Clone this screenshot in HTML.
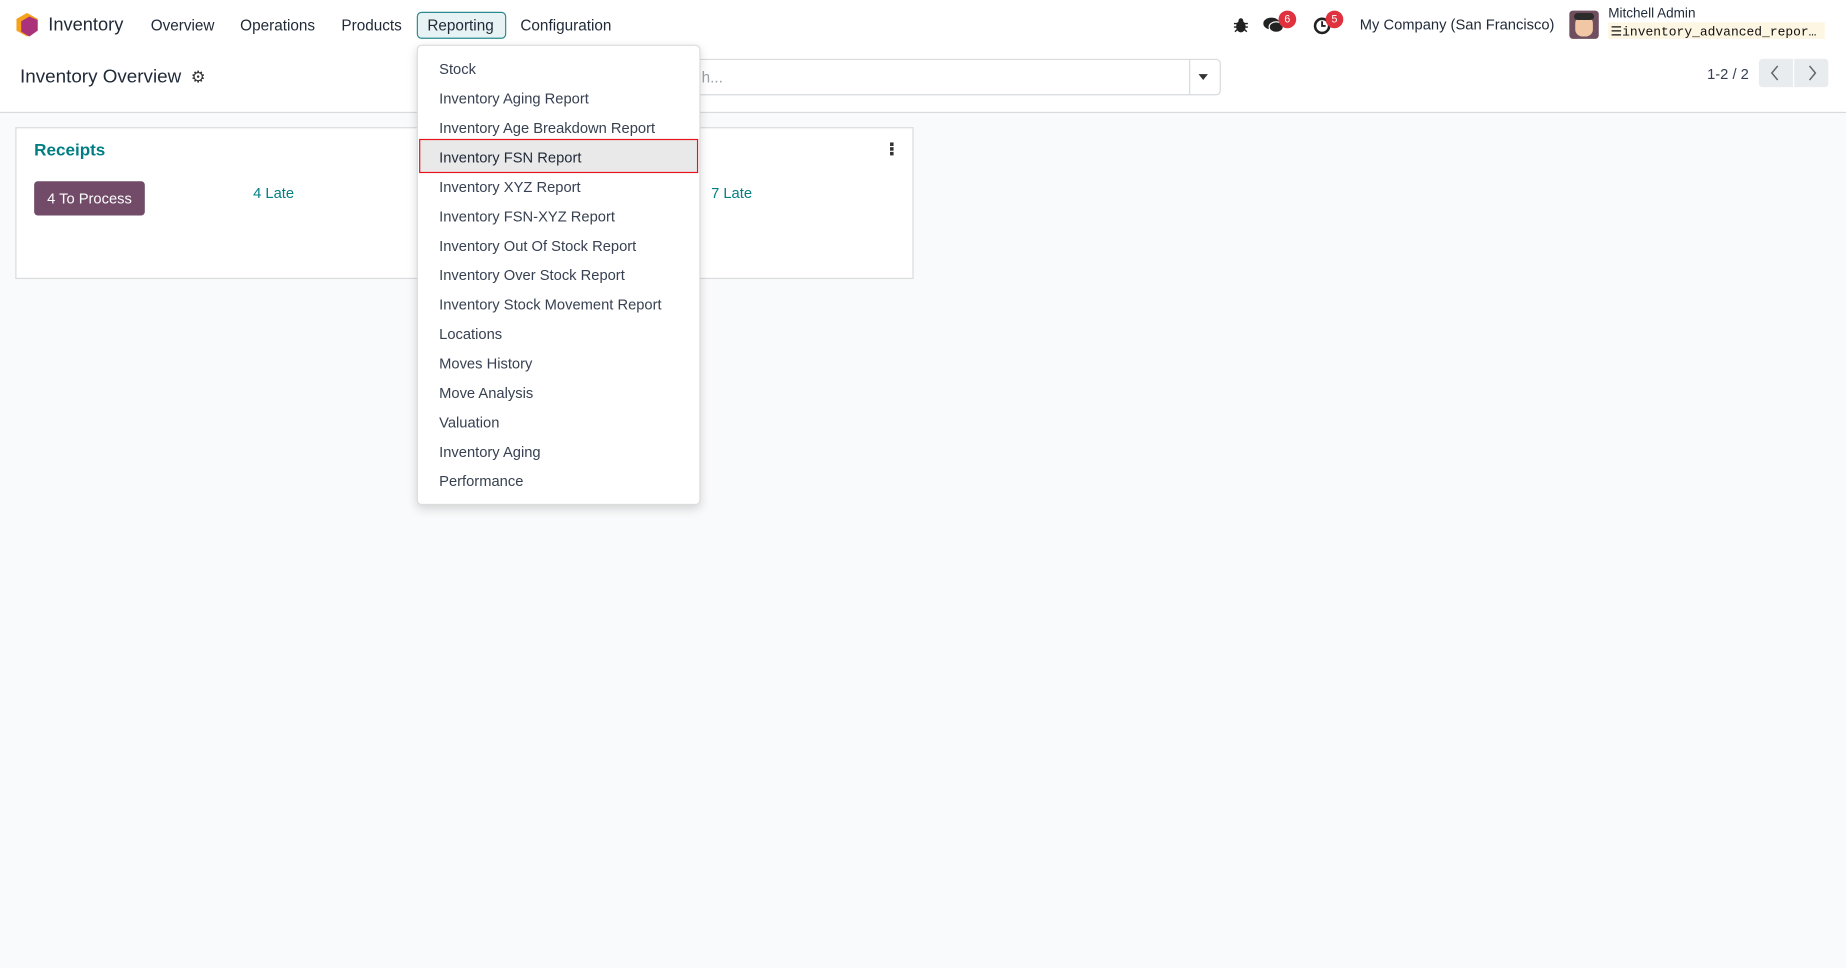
<!DOCTYPE html>
<html><head><meta charset="utf-8"><style>
html,body{margin:0;padding:0;width:1846px;height:968px;overflow:hidden;background:#f9fafb;}
#w{position:absolute;left:0;top:0;width:1568px;height:822px;transform:scale(1.17730);transform-origin:0 0;font-family:"Liberation Sans","DejaVu Sans",sans-serif;color:#374151;background:#f9fafb;}
.a{position:absolute;white-space:nowrap;}
.top{position:absolute;left:0;top:0;width:1568px;height:95px;background:#fff;border-bottom:1px solid #d8dadd;}
.nav{font-size:13px;color:#1f2937;top:14px;}
.card{position:absolute;top:108px;height:127px;background:#fff;border:1px solid #d8dadd;}
.menu{position:absolute;left:354px;top:38px;width:239px;height:389px;background:#fff;border:1px solid #dcdcdc;border-radius:4px;box-shadow:0 3px 8px rgba(0,0,0,.15);}
.mi{position:absolute;left:18px;font-size:12.5px;color:#374151;white-space:nowrap;}
.badge{position:absolute;width:15px;height:15px;border-radius:8px;background:#e0313f;color:#fff;font-size:9px;text-align:center;line-height:15px;}
</style></head><body><div id="w">
<div class="top"></div>
<svg class="a" style="left:13px;top:11px" width="20" height="21" viewBox="0 0 20 21"><polygon points="10,0 19,5 19,15 10,20 1,15 1,5" fill="#f6a21c"/><polygon points="12,3 19,6 19,15 12,20 5,16 5,7" fill="#a9327a"/></svg>
<div class="a" style="left:41px;top:13px;font-size:15.5px;color:#1f2937">Inventory</div>
<div class="a nav" style="left:128px">Overview</div>
<div class="a nav" style="left:204px">Operations</div>
<div class="a nav" style="left:290px">Products</div>
<div class="a" style="left:354px;top:10px;width:74px;height:21px;background:#e6f2f3;border:1px solid #2b8a8e;border-radius:4px"></div>
<div class="a nav" style="left:363px">Reporting</div>
<div class="a nav" style="left:442px">Configuration</div>
<svg class="a" style="left:1048px;top:15px" width="12" height="13" viewBox="0 0 12 13"><ellipse cx="6" cy="7.5" rx="4" ry="5" fill="#222"/><circle cx="6" cy="2.5" r="2" fill="#222"/><path d="M0 5h12M0 8h12M1 12l2-2M11 12l-2-2" stroke="#222" stroke-width="1.2"/></svg>
<svg class="a" style="left:1073px;top:14px" width="18" height="16" viewBox="0 0 18 16"><ellipse cx="7" cy="6" rx="7" ry="5" fill="#222"/><ellipse cx="11" cy="9" rx="6" ry="4.5" fill="#222" stroke="#fff" stroke-width="1"/></svg>
<div class="badge" style="left:1086px;top:9px">6</div>
<svg class="a" style="left:1115px;top:14px" width="16" height="16" viewBox="0 0 16 16"><circle cx="8" cy="8" r="6" fill="none" stroke="#222" stroke-width="2.2"/><path d="M8 4v4h3" stroke="#222" stroke-width="1.6" fill="none"/></svg>
<div class="badge" style="left:1126px;top:9px">5</div>
<div class="a" style="left:1155px;top:14px;font-size:12.5px;color:#1f2937">My Company (San Francisco)</div>
<div class="a" style="left:1333px;top:9px;width:25px;height:24px;background:#6f4e5e;border-radius:3px;overflow:hidden"><div style="position:absolute;left:5px;top:5px;width:15px;height:17px;background:#f1c7a5;border-radius:6px"></div><div style="position:absolute;left:4px;top:2px;width:17px;height:6px;background:#2b2b2b;border-radius:4px"></div></div>
<div class="a" style="left:1366px;top:6px;font-size:11.5px;color:#1f2937">Mitchell Admin</div>
<div class="a" style="left:1366px;top:19px;width:184px;height:14px;background:#fdf6e3"></div>
<div class="a" style="left:1368px;top:20px;font-size:11px;font-family:'Liberation Mono',monospace;color:#111">&#9776;inventory_advanced_repor…</div>
<div class="a" style="left:17px;top:57px;font-size:16px;color:#1f2937">Inventory Overview</div>
<div class="a" style="left:162px;top:57px;font-size:14px;color:#333">&#9881;</div>
<div class="a" style="left:500px;top:50px;width:535px;height:29px;border:1px solid #d8dadd;border-radius:4px;background:#fff"></div>
<div class="a" style="left:1010px;top:51px;width:1px;height:29px;background:#d8dadd"></div>
<div class="a" style="left:1018px;top:63px;width:0;height:0;border-left:4.5px solid transparent;border-right:4.5px solid transparent;border-top:5px solid #333"></div>
<div class="a" style="left:596px;top:58px;font-size:13px;color:#9aa0a6">h...</div>
<div class="a" style="left:1450px;top:56px;font-size:12.5px;color:#374151">1-2 / 2</div>
<div class="a" style="left:1494px;top:50px;width:29px;height:24px;background:#e9ecef;border-radius:3px 0 0 3px"></div>
<div class="a" style="left:1524px;top:50px;width:29px;height:24px;background:#e9ecef;border-radius:0 3px 3px 0"></div>
<svg class="a" style="left:1503px;top:55px" width="10" height="14" viewBox="0 0 10 14"><path d="M7 1L2 7l5 6" stroke="#666" stroke-width="1.3" fill="none"/></svg>
<svg class="a" style="left:1534px;top:55px" width="10" height="14" viewBox="0 0 10 14"><path d="M3 1l5 6-5 6" stroke="#666" stroke-width="1.3" fill="none"/></svg>
<div class="card" style="left:13px;width:370px"></div>
<div class="card" style="left:393px;width:381px"></div>
<div class="a" style="left:29px;top:120px;font-size:14.5px;font-weight:bold;color:#017e84">Receipts</div>
<div class="a" style="left:29px;top:154px;width:94px;height:29px;background:#714b67;border-radius:3px;color:#fff;font-size:12.5px;line-height:30px;text-align:center">4 To Process</div>
<div class="a" style="left:215px;top:157px;font-size:12.5px;color:#017e84">4 Late</div>
<div class="a" style="left:604px;top:157px;font-size:12.5px;color:#017e84">7 Late</div>
<div class="a" style="left:756px;top:121px;width:3px;height:3px;background:#333;box-shadow:0 4px 0 #333,0 8px 0 #333"></div>
<div class="menu">
<div class="a" style="left:1px;top:79px;width:235px;height:27px;background:#e9e9e9;border:1px solid #e8121b"></div>
<div class="mi" style="top:13px">Stock</div>
<div class="mi" style="top:38px">Inventory Aging Report</div>
<div class="mi" style="top:63px">Inventory Age Breakdown Report</div>
<div class="mi" style="top:88px;color:#1f2937">Inventory FSN Report</div>
<div class="mi" style="top:113px">Inventory XYZ Report</div>
<div class="mi" style="top:138px">Inventory FSN-XYZ Report</div>
<div class="mi" style="top:163px">Inventory Out Of Stock Report</div>
<div class="mi" style="top:188px">Inventory Over Stock Report</div>
<div class="mi" style="top:213px">Inventory Stock Movement Report</div>
<div class="mi" style="top:238px">Locations</div>
<div class="mi" style="top:263px">Moves History</div>
<div class="mi" style="top:288px">Move Analysis</div>
<div class="mi" style="top:313px">Valuation</div>
<div class="mi" style="top:338px">Inventory Aging</div>
<div class="mi" style="top:363px">Performance</div>
</div>
</div></body></html>
